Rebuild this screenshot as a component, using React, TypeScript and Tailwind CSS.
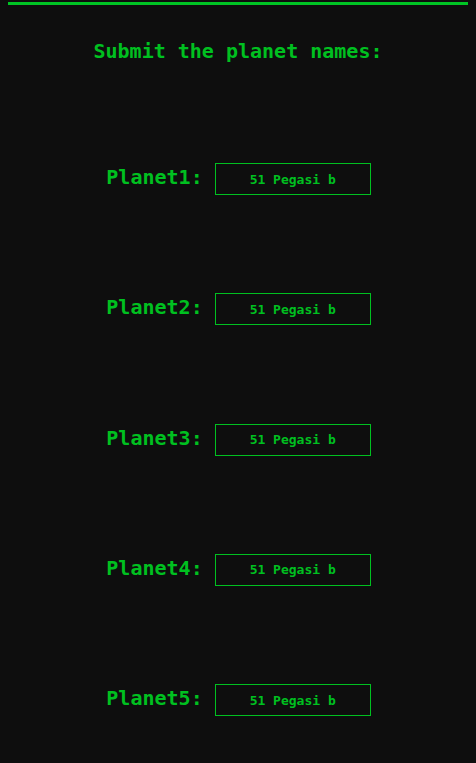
const planets = ["Planet1", "Planet2", "Planet3", "Planet4", "Planet5"];

const App = () => {
  return (
    <div
      className="min-h-screen bg-[#0e0e0e] px-2 pt-0.5 text-[#00c020]"
      style={{ fontFamily: '"DejaVu Sans Mono", "Liberation Mono", monospace' }}
    >
      <div className="h-[3px] bg-[#00c424]" />
      <h1 className="mt-[32px] text-center text-[20px] leading-[28px] font-bold">
        Submit the planet names:
      </h1>
      <div className="mt-[49px] flex flex-col">
        {planets.map((name) => (
          <div key={name} className="flex h-[130.25px] items-center justify-center gap-[12px] pl-[1px]">
            <label className="pb-[4px] text-[20px] leading-[28px] font-bold">{name}:</label>
            <input
              type="text"
              defaultValue="51 Pegasi b"
              className="h-[32px] w-[156px] border border-[#00c020] bg-transparent text-center text-[13px] font-bold text-[#00c020] outline-none"
            />
          </div>
        ))}
      </div>
    </div>
  );
};

export default App;
